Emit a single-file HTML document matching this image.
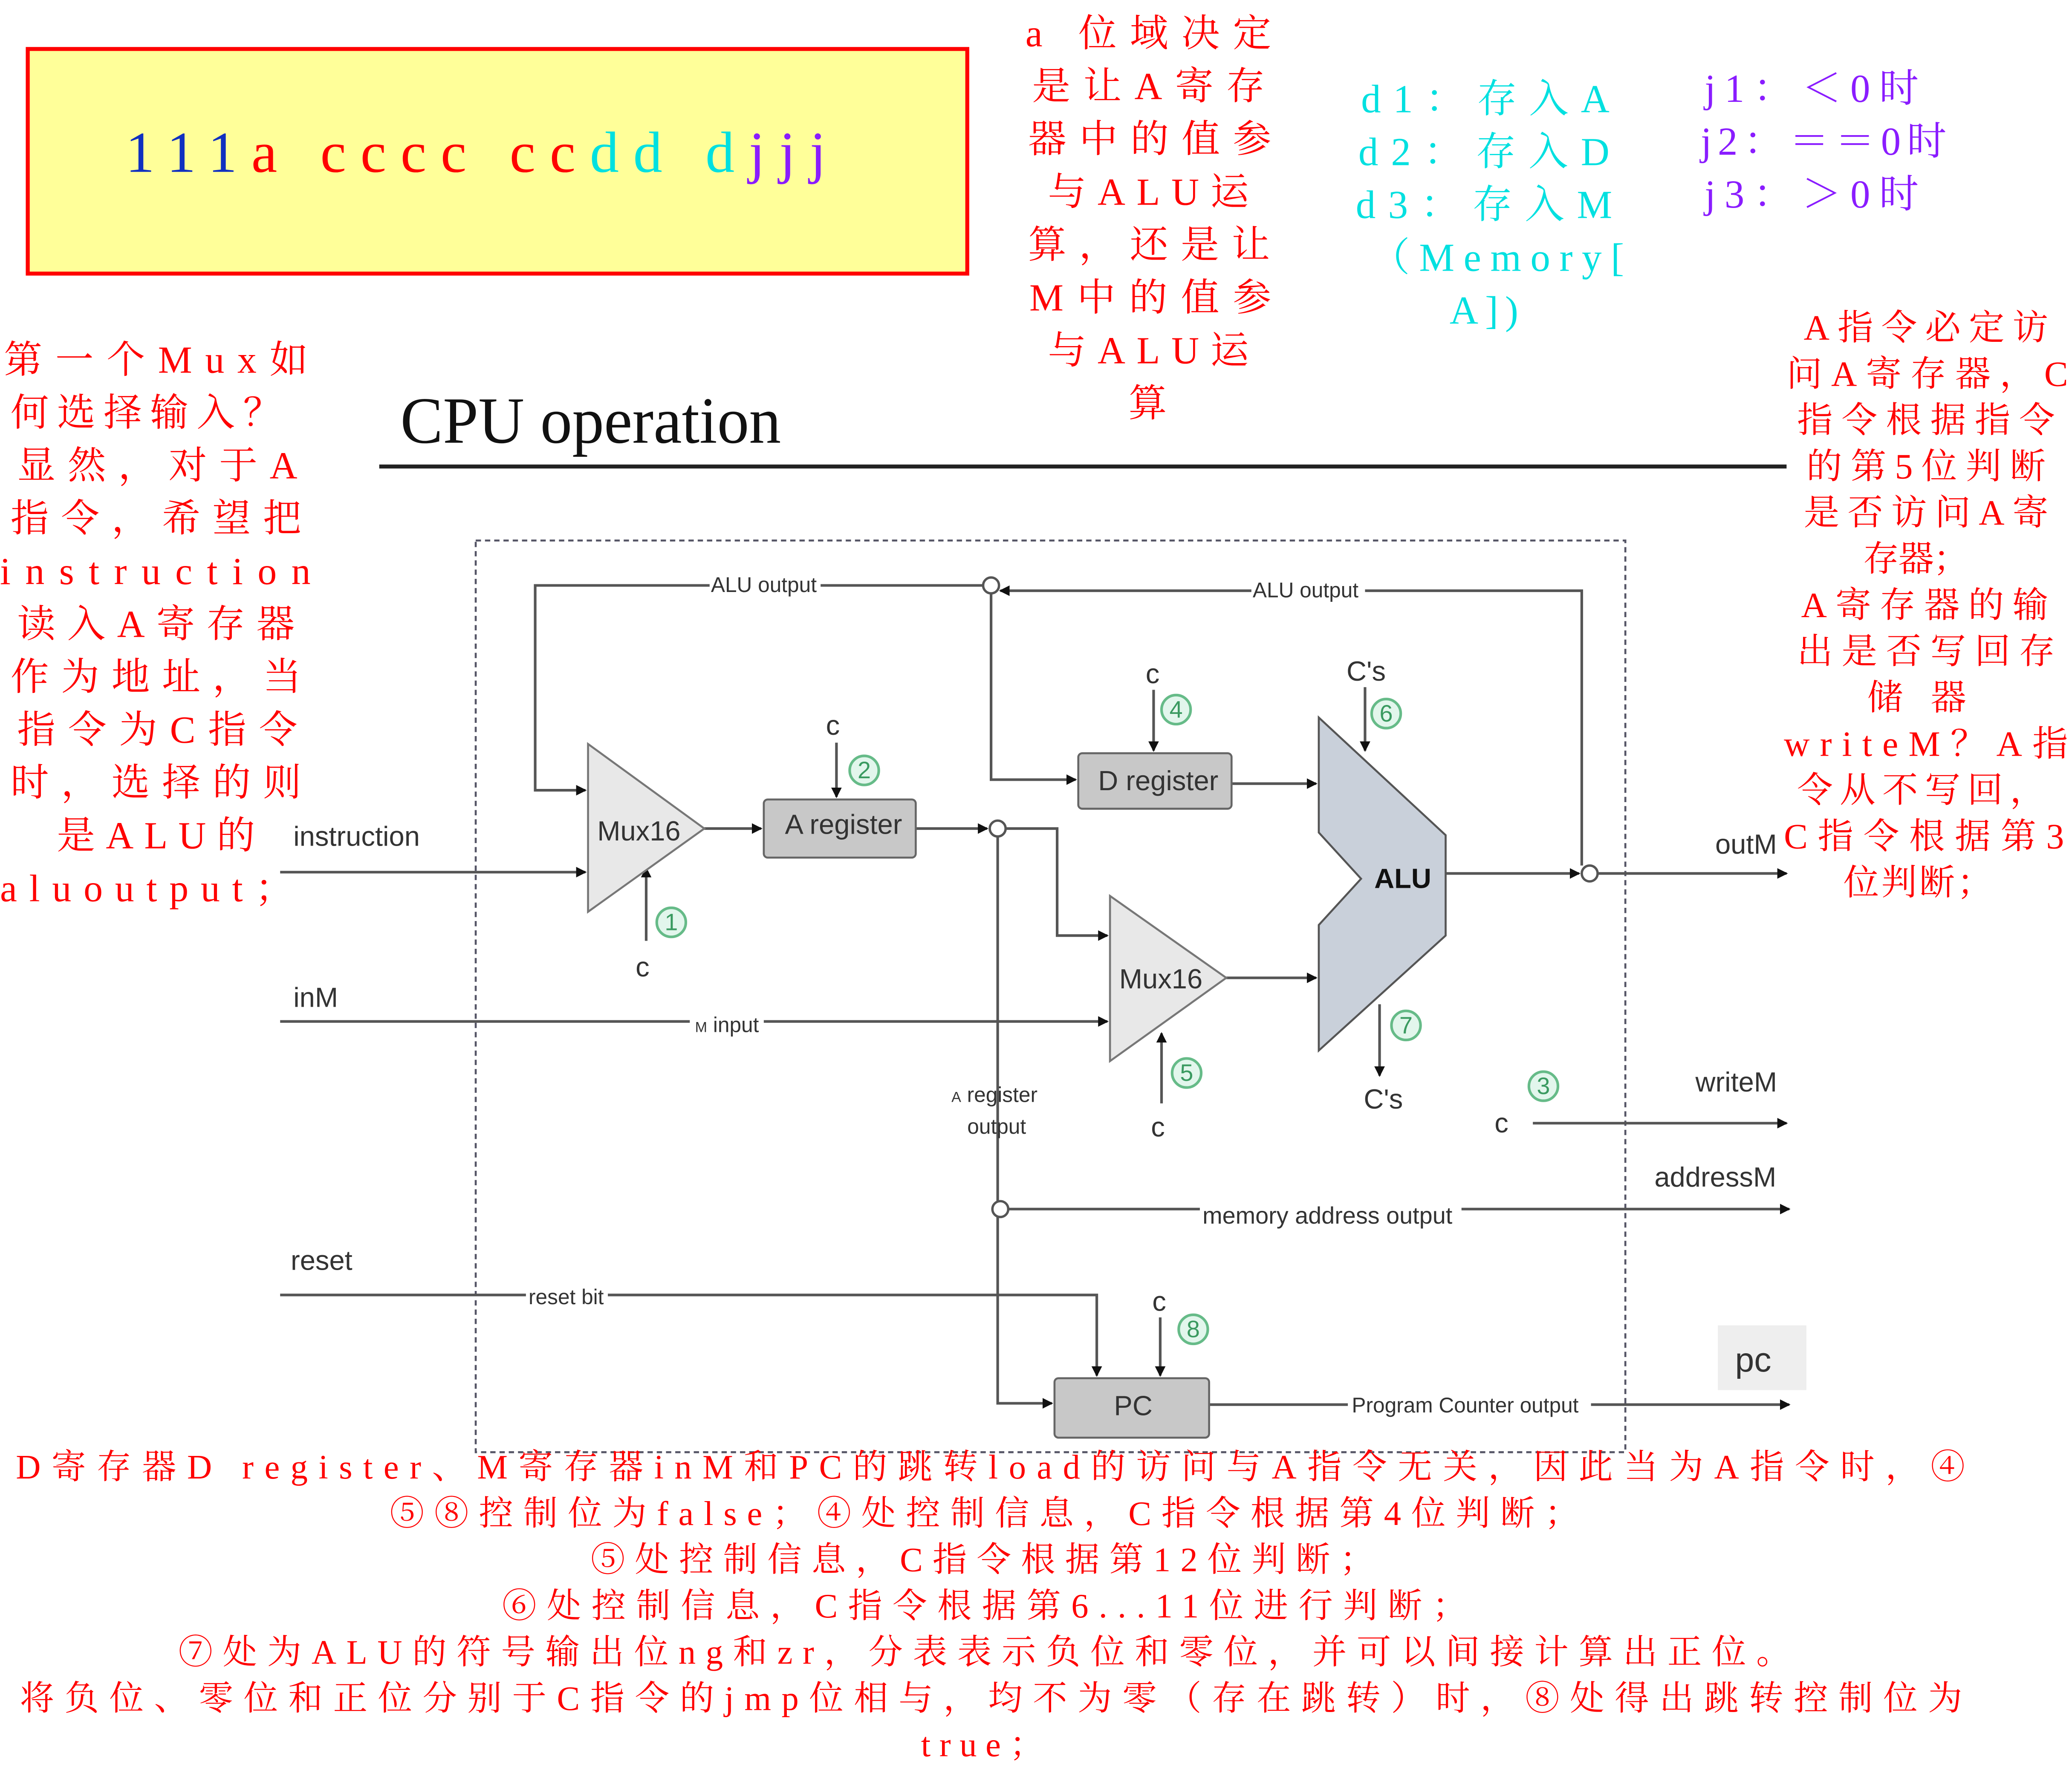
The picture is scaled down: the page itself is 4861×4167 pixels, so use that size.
<!DOCTYPE html>
<html><head><meta charset="utf-8"><style>
html,body{margin:0;padding:0;background:#fff;width:4861px;height:4167px;overflow:hidden}
svg{display:block}
.r{fill:#ff0000;font-family:"Liberation Serif","Noto Serif CJK SC",serif;font-size:29px}
.b{fill:#ff0000;font-family:"Liberation Serif","Noto Serif CJK SC",serif;font-size:26px}
.cy{fill:#00e0e0;font-family:"Liberation Serif","Noto Serif CJK SC",serif;font-size:30px}
.pu{fill:#8a1cff;font-family:"Liberation Serif","Noto Serif CJK SC",serif;font-size:30px}
.d{font-family:"Liberation Sans",sans-serif;fill:#333}
.ln{stroke:#555;stroke-width:2;fill:none}
</style></head><body>
<svg width="4861" height="4167" viewBox="0 0 1568 1344" xmlns="http://www.w3.org/2000/svg">
<defs><marker id="a" markerWidth="8" markerHeight="8" refX="7" refY="4" orient="auto" markerUnits="userSpaceOnUse"><path d="M0,0 L8,4 L0,8 z" fill="#111"/></marker></defs>
<rect width="1568" height="1344" fill="#fff"/>
<rect x="21" y="37" width="711" height="170" fill="#ffff99" stroke="#ff0000" stroke-width="3"/>
<text x="95" y="130" font-family="Liberation Serif,serif" font-size="44" textLength="530" lengthAdjust="spacing"><tspan fill="#1030c0">111</tspan><tspan fill="#ff0000">a cccc cc</tspan><tspan fill="#00e0e0">dd d</tspan><tspan fill="#8a1cff">jjj</tspan></text>
<g class="r">
<text x="776" y="35" textLength="186" lengthAdjust="spacing">a 位域决定</text>
<text x="781" y="75" textLength="176" lengthAdjust="spacing">是让A寄存</text>
<text x="778" y="115" textLength="184" lengthAdjust="spacing">器中的值参</text>
<text x="793" y="155" textLength="152" lengthAdjust="spacing">与ALU运</text>
<text x="778" y="195" textLength="183" lengthAdjust="spacing">算，还是让</text>
<text x="779" y="235" textLength="183" lengthAdjust="spacing">M中的值参</text>
<text x="793" y="275" textLength="152" lengthAdjust="spacing">与ALU运</text>
<text x="854" y="315">算</text>
</g>
<g class="cy">
<text x="1030" y="85" textLength="188" lengthAdjust="spacing">d1：存入A</text>
<text x="1028" y="125" textLength="190" lengthAdjust="spacing">d2：存入D</text>
<text x="1026" y="165" textLength="194" lengthAdjust="spacing">d3：存入M</text>
<text x="1037" y="205" textLength="192" lengthAdjust="spacing">（Memory[</text>
<text x="1097" y="245" textLength="52" lengthAdjust="spacing">A])</text>
</g>
<g class="pu">
<text x="1290" y="77" textLength="162" lengthAdjust="spacing">j1：＜0时</text>
<text x="1287" y="117" textLength="186" lengthAdjust="spacing">j2：＝＝0时</text>
<text x="1290" y="157" textLength="162" lengthAdjust="spacing">j3：＞0时</text>
</g>
<g class="r">
<text x="3" y="282" textLength="230" lengthAdjust="spacing">第一个Mux如</text>
<text x="8" y="322" textLength="205" lengthAdjust="spacing">何选择输入？</text>
<text x="13" y="362" textLength="212" lengthAdjust="spacing">显然，对于A</text>
<text x="8" y="402" textLength="220" lengthAdjust="spacing">指令，希望把</text>
<text x="0" y="442" textLength="235" lengthAdjust="spacing">instruction</text>
<text x="13" y="482" textLength="210" lengthAdjust="spacing">读入A寄存器</text>
<text x="8" y="522" textLength="220" lengthAdjust="spacing">作为地址，当</text>
<text x="13" y="562" textLength="212" lengthAdjust="spacing">指令为C指令</text>
<text x="8" y="602" textLength="220" lengthAdjust="spacing">时，选择的则</text>
<text x="43" y="642" textLength="150" lengthAdjust="spacing">是ALU的</text>
<text x="0" y="682" textLength="222" lengthAdjust="spacing">aluoutput；</text>
</g>
<g class="r" style="font-size:27px">
<text x="1365" y="257" textLength="185" lengthAdjust="spacing">A指令必定访</text>
<text x="1352" y="292" textLength="213" lengthAdjust="spacing">问A寄存器，C</text>
<text x="1360" y="327" textLength="195" lengthAdjust="spacing">指令根据指令</text>
<text x="1367" y="362" textLength="181" lengthAdjust="spacing">的第5位判断</text>
<text x="1365" y="397" textLength="185" lengthAdjust="spacing">是否访问A寄</text>
<text x="1410" y="432" textLength="80" lengthAdjust="spacing">存器；</text>
<text x="1363" y="467" textLength="187" lengthAdjust="spacing">A寄存器的输</text>
<text x="1360" y="502" textLength="195" lengthAdjust="spacing">出是否写回存</text>
<text x="1413" y="537" textLength="75" lengthAdjust="spacing">储器</text>
<text x="1350" y="572" textLength="215" lengthAdjust="spacing">writeM？A指</text>
<text x="1360" y="607" textLength="188" lengthAdjust="spacing">令从不写回，</text>
<text x="1350" y="642" textLength="212" lengthAdjust="spacing">C指令根据第3</text>
<text x="1395" y="677" textLength="113" lengthAdjust="spacing">位判断；</text>
</g>
<text x="303" y="335" font-family="Liberation Serif,serif" font-size="50" fill="#111" textLength="288" lengthAdjust="spacingAndGlyphs">CPU operation</text>
<line x1="287" y1="353" x2="1352" y2="353" stroke="#222" stroke-width="3"/>
<rect x="360" y="409" width="870" height="690" fill="none" stroke="#556" stroke-width="1.5" stroke-dasharray="4,3"/>
<g class="ln">
<path d="M620,443 H405 V598 H443" marker-end="url(#a)"/>
<path d="M540,443 H744"/>
<path d="M1197,655 V447 H757" marker-end="url(#a)"/>
<path d="M750,449 V590 H814" marker-end="url(#a)"/>
<path d="M212,660 H443" marker-end="url(#a)"/>
<path d="M533,627 H576" marker-end="url(#a)"/>
<path d="M693,627 H747" marker-end="url(#a)"/>
<path d="M761,627 H800 V708 H838" marker-end="url(#a)"/>
<path d="M932,593 H996" marker-end="url(#a)"/>
<path d="M928,740 H996" marker-end="url(#a)"/>
<path d="M1094,661 H1195" marker-end="url(#a)"/>
<path d="M1209,661 H1352" marker-end="url(#a)"/>
<path d="M212,773 H838" marker-end="url(#a)"/>
<path d="M755,633 V909"/>
<path d="M755,921 V1062 H796" marker-end="url(#a)"/>
<path d="M763,915 H1354" marker-end="url(#a)"/>
<path d="M212,980 H830 V1041" marker-end="url(#a)"/>
<path d="M915,1063 H1354" marker-end="url(#a)"/>
<path d="M1160,850 H1352" marker-end="url(#a)"/>
<path d="M633,562 V603" marker-end="url(#a)"/>
<path d="M489,712 V657" marker-end="url(#a)"/>
<path d="M873,522 V568" marker-end="url(#a)"/>
<path d="M1033,520 V568" marker-end="url(#a)"/>
<path d="M1044,760 V814" marker-end="url(#a)"/>
<path d="M879,835 V782" marker-end="url(#a)"/>
<path d="M878,997 V1041" marker-end="url(#a)"/>
</g>
<g fill="#fff">
<rect x="537" y="435" width="84" height="16"/><rect x="947" y="439" width="86" height="16"/>
<rect x="522" y="766" width="56" height="16"/><rect x="908" y="907" width="198" height="18"/>
<rect x="398" y="972" width="62" height="16"/><rect x="1020" y="1055" width="184" height="18"/>
</g>
<g fill="#fff" stroke="#555" stroke-width="1.8">
<circle cx="750" cy="443" r="6"/><circle cx="755" cy="627" r="6"/><circle cx="1203" cy="661" r="6"/><circle cx="757" cy="915" r="6"/>
</g>
<polygon points="445,563 445,690 533,627" fill="#e8e8e8" stroke="#777" stroke-width="1.5"/>
<polygon points="840,678 840,803 928,740" fill="#e8e8e8" stroke="#777" stroke-width="1.5"/>
<rect x="578" y="605" width="115" height="44" rx="3" fill="#c8c8c8" stroke="#666" stroke-width="1.5"/>
<rect x="816" y="570" width="116" height="42" rx="3" fill="#c8c8c8" stroke="#666" stroke-width="1.5"/>
<rect x="798" y="1043" width="117" height="45" rx="3" fill="#c8c8c8" stroke="#666" stroke-width="1.5"/>
<polygon points="998,543 1094,632 1094,708 998,795 998,700 1030,665 998,630" fill="#c9d0da" stroke="#555" stroke-width="1.5"/>
<rect x="1300" y="1003" width="67" height="49" fill="#eeeeee"/>
<g class="d" font-size="21">
<text x="452" y="636">Mux16</text><text x="847" y="748">Mux16</text>
<text x="594" y="631">A register</text><text x="831" y="598">D register</text>
<text x="843" y="1071">PC</text>
<text x="1040" y="672" font-weight="bold" fill="#111">ALU</text>
<text x="222" y="640">instruction</text><text x="222" y="762">inM</text><text x="220" y="961">reset</text>
<text x="1298" y="646">outM</text><text x="1283" y="826">writeM</text><text x="1252" y="898">addressM</text>
<text x="1313" y="1038" font-size="26">pc</text>
<text x="625" y="556">c</text><text x="481" y="739">c</text><text x="867" y="517">c</text><text x="871" y="860">c</text>
<text x="1131" y="857">c</text><text x="872" y="992">c</text>
<text x="1019" y="515">C's</text><text x="1032" y="839">C's</text>
</g>
<g class="d" font-size="16">
<text x="538" y="448">ALU output</text><text x="948" y="452">ALU output</text>
<text x="526" y="781"><tspan font-size="11">M</tspan> input</text>
<text x="720" y="834"><tspan font-size="11">A</tspan> register</text><text x="732" y="858">output</text>
<text x="910" y="926" font-size="18">memory address output</text>
<text x="400" y="987">reset bit</text>
<text x="1023" y="1069">Program Counter output</text>
</g>
<g fill="#e2f6ec" stroke="#66bb88" stroke-width="2">
<circle cx="508" cy="698" r="11"/><circle cx="654" cy="583" r="11"/><circle cx="1168" cy="822" r="11"/><circle cx="890" cy="537" r="11"/>
<circle cx="898" cy="812" r="11"/><circle cx="1049" cy="540" r="11"/><circle cx="1064" cy="776" r="11"/><circle cx="903" cy="1006" r="11"/>
</g>
<g fill="#3a9a60" font-family="Liberation Sans,sans-serif" font-size="18" text-anchor="middle">
<text x="508" y="704">1</text><text x="654" y="589">2</text><text x="1168" y="828">3</text><text x="890" y="543">4</text>
<text x="898" y="818">5</text><text x="1049" y="546">6</text><text x="1064" y="782">7</text><text x="903" y="1012">8</text>
</g>
<g class="b">
<text x="12" y="1119" textLength="1475" lengthAdjust="spacing">D寄存器D register、M寄存器inM和PC的跳转load的访问与A指令无关，因此当为A指令时，④</text>
<text x="295" y="1154" textLength="900" lengthAdjust="spacing">⑤⑧控制位为false；④处控制信息，C指令根据第4位判断；</text>
<text x="447" y="1189" textLength="593" lengthAdjust="spacing">⑤处控制信息，C指令根据第12位判断；</text>
<text x="380" y="1224" textLength="730" lengthAdjust="spacing">⑥处控制信息，C指令根据第6...11位进行判断；</text>
<text x="135" y="1259" textLength="1220" lengthAdjust="spacing">⑦处为ALU的符号输出位ng和zr，分表表示负位和零位，并可以间接计算出正位。</text>
<text x="15" y="1294" textLength="1470" lengthAdjust="spacing">将负位、零位和正位分别于C指令的jmp位相与，均不为零（存在跳转）时，⑧处得出跳转控制位为</text>
<text x="697" y="1329" textLength="93" lengthAdjust="spacing">true；</text>
</g>
</svg>
</body></html>
